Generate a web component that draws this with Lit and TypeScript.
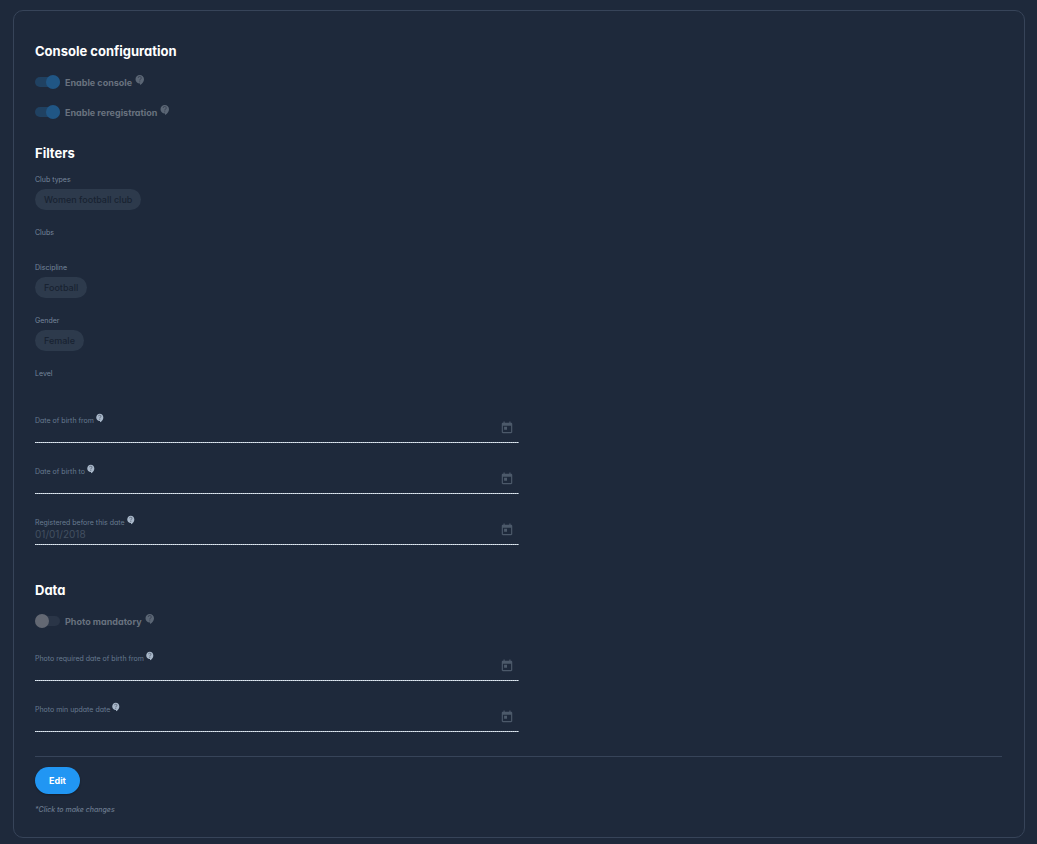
import { LitElement, html, css } from "lit";
import { customElement, property } from "lit/decorators.js";

@customElement("help-icon")
class HelpIcon extends LitElement {
  static styles = css`
    :host { display: inline-flex; width: 12px; height: 12px; }
    svg { width: 100%; height: 100%; fill: currentColor; }
  `;
  render() {
    return html`<svg viewBox="0 0 24 24" aria-hidden="true"><circle cx="11.5" cy="10.5" r="7" opacity="0.5"/><path d="M11.5 2C6.81 2 3 5.81 3 10.5S6.81 19 11.5 19h.5v3c4.86-2.34 8-7 8-11.5C20 5.81 16.19 2 11.5 2zm1 14.5h-2v-2h2v2zm0-3.5h-2c0-3.25 3-3 3-5 0-1.1-.9-2-2-2s-2 .9-2 2h-2c0-2.21 1.79-4 4-4s4 1.79 4 4c0 2.5-3 2.75-3 5z"/></svg>`;
  }
}

@customElement("slide-toggle")
class SlideToggle extends LitElement {
  @property() label = "";
  @property({ type: Boolean }) checked = false;
  static styles = css`
    :host { display: block; }
    .row { display: flex; align-items: center; height: 30px; }
    .switch {
      appearance: none; display: flex; align-items: center; flex: none;
      width: 25px; height: 10px; margin: 0 5px 0 0; border-radius: 5px; background: #2a3547;
    }
    .switch::before { content: ""; width: 14px; height: 14px; flex: none; border-radius: 50%; background: #636873; }
    .switch:checked { justify-content: flex-end; background: #20406050; background: #204161; }
    .switch:checked::before { background: #205685; }
    .text { font-size: 9px; line-height: 12px; font-weight: 700; color: #69727f; padding-top: 2px; }
    help-icon { color: #5b6675; margin: 0 0 4px 2px; }
  `;
  render() {
    return html`<div class="row">
      <input class="switch" id="switch" type="checkbox" role="switch" .checked=${this.checked} disabled />
      <label class="text" for="switch">${this.label}</label>
      <help-icon></help-icon>
    </div>`;
  }
}

@customElement("chip-group")
class ChipGroup extends LitElement {
  @property() label = "";
  @property({ attribute: false }) chips: string[] = [];
  static styles = css`
    :host { display: flex; flex-direction: column; gap: 4px; padding-bottom: 18px; }
    .label { font-size: 7px; line-height: 10px; color: #76879c; }
    .chips { display: flex; flex-wrap: wrap; gap: 4px; min-height: 3px; }
    .chip {
      padding: 0 9px; border-radius: 11px; background: #2d3a4c; color: #182231;
      font-size: 9px; line-height: 21px; font-weight: 500; font-feature-settings: normal;
    }
  `;
  render() {
    return html`<div class="label">${this.label}</div>
      <div class="chips">${this.chips.map((c) => html`<span class="chip">${c}</span>`)}</div>`;
  }
}

@customElement("date-field")
class DateField extends LitElement {
  @property() label = "";
  @property() value = "";
  static styles = css`
    :host { display: block; width: 50%; }
    .field {
      display: flex; align-items: center; padding-bottom: 1px;
      background: repeating-linear-gradient(to right, #e3eaf1 0 1px, #b3c1cf 1px 2px) bottom / 100% 1px no-repeat;
    }
    .main { flex: 1; min-width: 0; padding-bottom: 4px; }
    .caption { display: flex; align-items: center; height: 12px; gap: 1px; }
    label { font-size: 7px; line-height: 12px; color: #687b90; padding-top: 1px; }
    help-icon { width: 10px; height: 10px; color: #a9b8ca; margin-bottom: 4px; }
    input {
      display: block; width: 100%; height: 12px; padding: 0; border: 0; outline: 0;
      background: none; font: inherit; font-size: 10px; line-height: 12px; color: #435061;
    }
    button {
      display: flex; padding: 0; margin-right: 5px; border: 0; background: none; color: #4c596a;
    }
    svg { width: 14px; height: 14px; fill: currentColor; }
  `;
  render() {
    return html`<div class="field">
      <div class="main">
        <div class="caption"><label for="date">${this.label}</label><help-icon></help-icon></div>
        <input id="date" type="text" .value=${this.value} disabled />
      </div>
      <button type="button" aria-label="Open calendar" disabled>
        <svg viewBox="0 0 24 24"><path d="M19 3h-1V1h-2v2H8V1H6v2H5c-1.11 0-1.99.9-1.99 2L3 19c0 1.1.89 2 2 2h14c1.1 0 2-.9 2-2V5c0-1.1-.9-2-2-2zm0 16H5V8h14v11zM7 10h5v5H7z"/></svg>
      </button>
    </div>`;
  }
}

@customElement("app-root")
class AppRoot extends LitElement {
  static styles = css`
    :host {
      display: block; box-sizing: border-box; min-height: 100vh; padding: 10px 12px 6px 13px;
      background: #1e293b; color: #fff;
      font-family: Inter, "Noto Sans", sans-serif; font-feature-settings: "cv11";
    }
    .card { padding: 30px 22px 21px 21px; border: 1px solid #374459; border-radius: 10px; }
    h2 { margin: 0 0 6px; font-size: 13px; line-height: 20px; font-weight: 700; }
    .toggles, .groups, .dates { display: flex; flex-direction: column; }
    .filters { margin-top: 16px; }
    .groups { margin-top: 12px; }
    .dates { gap: 22px; margin-top: 10px; }
    .data { margin-top: 35px; }
    .data .dates { margin-top: 16px; }
    .actions { margin-top: 24px; padding-top: 10px; border-top: 1px solid #374459; }
    .edit {
      display: block; height: 27px; padding: 0 14px; border: 0; border-radius: 14px;
      background: #2196f3; color: #fff; font: inherit; font-feature-settings: inherit;
      font-size: 9px; font-weight: 700; line-height: 27px;
      box-shadow: 0 1px 2px rgba(0, 0, 0, 0.3);
    }
    .note { margin: 10px 0 0; font-size: 7px; line-height: 12px; font-weight: 500; font-style: italic; color: #6b7a8e; }
  `;
  render() {
    return html`<main class="card">
      <section>
        <h2>Console configuration</h2>
        <div class="toggles">
          <slide-toggle label="Enable console" checked></slide-toggle>
          <slide-toggle label="Enable reregistration" checked></slide-toggle>
        </div>
      </section>
      <section class="filters">
        <h2>Filters</h2>
        <div class="groups">
          <chip-group label="Club types" .chips=${["Women football club"]}></chip-group>
          <chip-group label="Clubs"></chip-group>
          <chip-group label="Discipline" .chips=${["Football"]}></chip-group>
          <chip-group label="Gender" .chips=${["Female"]}></chip-group>
          <chip-group label="Level"></chip-group>
        </div>
        <div class="dates">
          <date-field label="Date of birth from"></date-field>
          <date-field label="Date of birth to"></date-field>
          <date-field label="Registered before this date" value="01/01/2018"></date-field>
        </div>
      </section>
      <section class="data">
        <h2>Data</h2>
        <slide-toggle label="Photo mandatory"></slide-toggle>
        <div class="dates">
          <date-field label="Photo required date of birth from"></date-field>
          <date-field label="Photo min update date"></date-field>
        </div>
      </section>
      <div class="actions">
        <button class="edit" type="button">Edit</button>
        <p class="note">*Click to make changes</p>
      </div>
    </main>`;
  }
}
